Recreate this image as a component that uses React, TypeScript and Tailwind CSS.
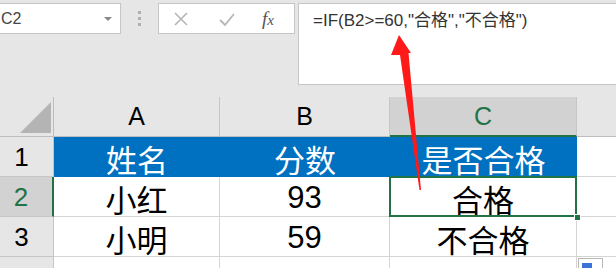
export default function App() {
  const cjk = "font-['Noto_Sans_CJK_SC',sans-serif] leading-none pt-[3px]";
  return (
    <div className="relative w-[616px] h-[268px] overflow-hidden bg-[#e6e6e6] font-['Liberation_Sans','Noto_Sans_CJK_SC',sans-serif]">
      {/* formula bar */}
      <div className="flex items-start h-[97px] pt-[3px]">
        <div className="relative w-[121px] h-[31px] shrink-0 bg-white border border-l-0 border-[#c6c6c6] flex items-center pl-[1px] text-[16px] text-[#444]">
          C2
          <span className="absolute left-[104px] top-[13px] w-0 h-0 border-l-[4px] border-r-[4px] border-t-[4px] border-l-transparent border-r-transparent border-t-[#888]" />
        </div>
        <div className="w-[37px] h-[31px] shrink-0 flex flex-col items-center justify-center gap-[3px] pr-[1px]">
          <span className="w-[3px] h-[3px] bg-[#b0b0b0]" />
          <span className="w-[3px] h-[3px] bg-[#b0b0b0]" />
          <span className="w-[3px] h-[3px] bg-[#b0b0b0]" />
        </div>
        <div className="w-[137px] h-[31px] shrink-0 bg-white border border-[#c6c6c6] flex items-center">
          <svg width="16" height="16" viewBox="0 0 16 16" className="ml-[14px]">
            <path d="M2 2 L14 14 M14 2 L2 14" stroke="#b5b5b5" strokeWidth="1.6" fill="none" />
          </svg>
          <svg width="18" height="16" viewBox="0 0 18 16" className="ml-[29px]">
            <path d="M2 9 L7 14 L16 3" stroke="#b5b5b5" strokeWidth="1.8" fill="none" />
          </svg>
          <span className="ml-[26px] text-[19px] italic text-[#555] font-['Liberation_Serif',serif] leading-none">
            f<span className="text-[15px]">x</span>
          </span>
        </div>
        <div className="ml-[3px] flex-1 h-[82px] bg-white border border-r-0 border-[#c6c6c6] pl-[14px] pt-[4px] text-[17px] text-[#333]">
          =IF(B2&gt;=60,"合格","不合格")
        </div>
      </div>

      {/* grid */}
      <div className="grid grid-cols-[54px_166px_170px_187px_1fr] grid-rows-[40px_40px_40px_40px_40px]">
        {/* header row */}
        <div className="relative bg-[#e6e6e6] border-r border-b border-[#bdbdbd]">
          <svg width="34" height="34" viewBox="0 0 34 34" className="absolute left-[18px] top-[3px]">
            <polygon points="33,2 33,33 2,33" fill="#b4b4b4" />
          </svg>
        </div>
        <div className="flex items-center justify-center border-r border-b border-[#c6c6c6] border-b-[#bdbdbd] text-[25px] leading-none text-black">A</div>
        <div className="flex items-center justify-center border-r border-b border-[#c6c6c6] border-b-[#bdbdbd] text-[25px] leading-none text-black">B</div>
        <div className="flex items-center justify-center bg-[#d2d2d2] border-r border-[#c6c6c6] border-b-2 border-b-[#217346] text-[25px] leading-none text-[#217346]">C</div>
        <div className="border-b border-[#bdbdbd]" />

        {/* row 1 */}
        <div className="flex items-center justify-center pr-[10px] bg-[#e6e6e6] border-r border-b border-[#c6c6c6] text-[26px] leading-none text-black">1</div>
        <div className={`flex items-center justify-center bg-[#0070c0] text-white text-[31px] ${cjk}`}>姓名</div>
        <div className={`flex items-center justify-center bg-[#0070c0] text-white text-[31px] ${cjk}`}>分数</div>
        <div className={`flex items-center justify-center bg-[#0070c0] text-white text-[31px] ${cjk}`}>是否合格</div>
        <div className="bg-white border-b border-[#d4d4d4]" />

        {/* row 2 */}
        <div className="flex items-center justify-center pr-[10px] bg-[#d2d2d2] border-r-2 border-r-[#217346] border-b border-b-[#c6c6c6] text-[26px] leading-none text-[#217346]">2</div>
        <div className={`flex items-center justify-center bg-white border-r border-b border-[#d4d4d4] text-[31px] text-black ${cjk}`}>小红</div>
        <div className="flex items-center justify-center bg-white border-r border-b border-[#d4d4d4] text-[31px] leading-none pt-[2px] text-black">93</div>
        <div className={`relative flex items-center justify-center bg-white border-r border-b border-[#d4d4d4] text-[31px] text-black ${cjk}`}>
          合格
          <div className="absolute -left-px -top-px -right-px -bottom-px border-2 border-[#217346]" />
          <div className="absolute right-[-5px] bottom-[-5px] w-[7px] h-[7px] bg-[#217346] border border-white z-10" />
        </div>
        <div className="bg-white border-b border-[#d4d4d4]" />

        {/* row 3 */}
        <div className="flex items-center justify-center pr-[10px] bg-[#e6e6e6] border-r border-b border-[#c6c6c6] text-[26px] leading-none text-black">3</div>
        <div className={`flex items-center justify-center bg-white border-r border-b border-[#d4d4d4] text-[31px] text-black ${cjk}`}>小明</div>
        <div className="flex items-center justify-center bg-white border-r border-b border-[#d4d4d4] text-[31px] leading-none pt-[2px] text-black">59</div>
        <div className={`flex items-center justify-center bg-white border-r border-b border-[#d4d4d4] text-[31px] text-black ${cjk}`}>不合格</div>
        <div className="bg-white border-b border-[#d4d4d4]" />

        {/* row 4 */}
        <div className="flex items-center justify-center pr-[10px] bg-[#e6e6e6] border-r border-[#c6c6c6] text-[26px] leading-none text-black">4</div>
        <div className="bg-white border-r border-[#d4d4d4]" />
        <div className="bg-white border-r border-[#d4d4d4]" />
        <div className="bg-white border-r border-[#d4d4d4]" />
        <div className="bg-white" />
      </div>

      {/* paste options */}
      <div className="absolute left-[578px] top-[258px] w-[25px] h-[20px] bg-white border border-[#b8b8b8]">
        <div className="absolute left-[3px] top-[4px] w-[10px] h-[10px] bg-[#3b73d9]" />
      </div>

      {/* red arrow */}
      <svg className="absolute left-0 top-0 pointer-events-none" width="616" height="268" viewBox="0 0 616 268">
        <polygon points="399,35 411,53 408.5,53 421,190 419.5,190 400,55 391,55" fill="#ff1a1a" />
      </svg>
    </div>
  );
}
